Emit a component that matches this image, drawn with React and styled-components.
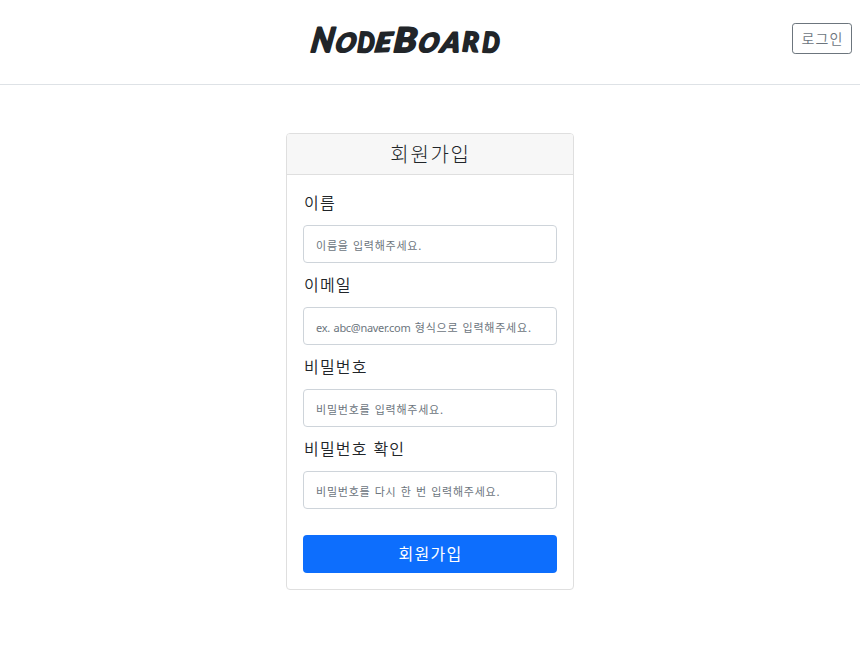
import React from "react";
import styled, { createGlobalStyle } from "styled-components";

const GlobalStyle = createGlobalStyle`
  *, *::before, *::after { box-sizing: border-box; }
  body {
    margin: 0;
    background: #fff;
    color: #212529;
    font-family: "Noto Sans CJK KR", sans-serif;
    font-weight: 350;
    font-size: 16px;
    line-height: 24px;
  }
`;

const Page = styled.div`
  width: 860px;
  min-height: 646px;
`;

const Header = styled.header`
  display: grid;
  grid-template-columns: 1fr 200px 1fr;
  align-items: start;
  height: 85px;
  padding: 15px 8px 0 0;
  border-bottom: 1px solid #dee2e6;
`;

const Logo = styled.svg`
  grid-column: 2;
  width: 200px;
  height: 48px;
  justify-self: center;
  margin-left: -38px;
  overflow: visible;
  fill: #212529;
  stroke: #212529;
  stroke-width: 1.8px;
  stroke-linejoin: round;
  font-family: Lato, sans-serif;
  font-weight: 900;
  font-style: italic;
`;

const LoginButton = styled.button`
  justify-self: end;
  width: 60px;
  height: 31px;
  margin-top: 8px;
  padding: 0 0 1px;
  border: 1px solid #6c757d;
  border-radius: 3.2px;
  background: transparent;
  color: #6c757d;
  font: 350 14px/21px "Noto Sans CJK KR", sans-serif;
  letter-spacing: 1.1px;
  text-indent: 1px;
`;

const Card = styled.main`
  width: 288px;
  height: 457px;
  margin: 48px auto 0;
  border: 1px solid #dfdfdf;
  border-radius: 4px;
  overflow: hidden;
`;

const CardTitle = styled.h1`
  height: 41px;
  margin: 0;
  border-bottom: 1px solid #dfdfdf;
  background: #f7f7f7;
  text-align: center;
  text-indent: 1px;
  font-size: 20px;
  font-weight: 300;
  line-height: 39px;
  letter-spacing: 1.7px;
`;

const Form = styled.form`
  display: flex;
  flex-direction: column;
  padding: 16px;
`;

const Field = styled.label`
  display: flex;
  flex-direction: column;
  gap: 10px;
  height: 82px;
`;

const Label = styled.span`
  height: 24px;
  padding-left: 1px;
  line-height: 22px;
  letter-spacing: 1.2px;
  word-spacing: 1px;
`;

const Control = styled.span`
  position: relative;
  display: block;
  height: 38px;
`;

const Input = styled.input`
  width: 100%;
  height: 38px;
  padding: 6px 12px;
  border: 1px solid #ced4da;
  border-radius: 4px;
  outline: none;
  font: inherit;
`;

const Hint = styled.span`
  position: absolute;
  inset: 8px 13px auto;
  color: #6c757d;
  font-size: 11px;
  font-weight: 400;
  line-height: 24px;
  letter-spacing: 0.76px;
  word-spacing: 1.1px;
  white-space: pre;
  pointer-events: none;

  ${Input}:not(:placeholder-shown) + & {
    display: none;
  }
`;

const Example = styled.span`
  font-family: "Noto Sans", sans-serif;
  font-size: 11px;
  letter-spacing: -0.3px;
`;

const SubmitButton = styled.button`
  height: 38px;
  margin-top: 16px;
  padding: 0 0 2px;
  border: 0;
  border-radius: 4px;
  background: #0d6efd;
  color: #fff;
  font: 400 16px/24px "Noto Sans CJK KR", sans-serif;
  letter-spacing: 1.28px;
  text-indent: 1px;
`;

const LETTERS = [
  { char: "N", x: 3, y: 37, size: 34, stretch: 0.92, tilt: -9, turn: 0 },
  { char: "O", x: 27, y: 37, size: 26, stretch: 1.0, tilt: -14, turn: 0 },
  { char: "D", x: 50, y: 37, size: 28, stretch: 0.86, tilt: 0, turn: 3 },
  { char: "E", x: 67, y: 37, size: 26, stretch: 1.18, tilt: -12, turn: -3 },
  { char: "B", x: 86, y: 37, size: 34, stretch: 1.1, tilt: -5, turn: 0 },
  { char: "O", x: 110, y: 37, size: 26, stretch: 1.0, tilt: -14, turn: 0 },
  { char: "A", x: 133, y: 37, size: 27, stretch: 1.05, tilt: -12, turn: 0 },
  { char: "R", x: 155, y: 36, size: 27, stretch: 1, tilt: 0, turn: 3 },
  { char: "D", x: 175, y: 37, size: 28, stretch: 0.86, tilt: 0, turn: 3 },
];

const FIELDS = [
  { label: "이름", hint: "이름을 입력해주세요.", type: "text" },
  {
    label: "이메일",
    example: "ex. abc@naver.com",
    hint: " 형식으로 입력해주세요.",
    type: "email",
  },
  { label: "비밀번호", hint: "비밀번호를 입력해주세요.", type: "password" },
  { label: "비밀번호 확인", hint: "비밀번호를 다시 한 번 입력해주세요.", type: "password" },
];

export default function App() {
  return (
    <>
      <GlobalStyle />
      <Page>
        <Header>
          <Logo viewBox="0 0 200 48" aria-label="NodeBoard">
            {LETTERS.map(({ char, x, y, size, stretch, tilt, turn }, i) => (
              <text
                key={i}
                fontSize={size}
                transform={`translate(${x} ${y}) rotate(${turn}) skewX(${tilt}) scale(${stretch} 1)`}
              >
                {char}
              </text>
            ))}
          </Logo>
          <LoginButton type="button">로그인</LoginButton>
        </Header>
        <Card>
          <CardTitle>회원가입</CardTitle>
          <Form>
            {FIELDS.map(({ label, hint, example, type }) => (
              <Field key={label}>
                <Label>{label}</Label>
                <Control>
                  <Input type={type} placeholder=" " />
                  <Hint>
                    {example && <Example>{example}</Example>}
                    {hint}
                  </Hint>
                </Control>
              </Field>
            ))}
            <SubmitButton type="button">회원가입</SubmitButton>
          </Form>
        </Card>
      </Page>
    </>
  );
}
